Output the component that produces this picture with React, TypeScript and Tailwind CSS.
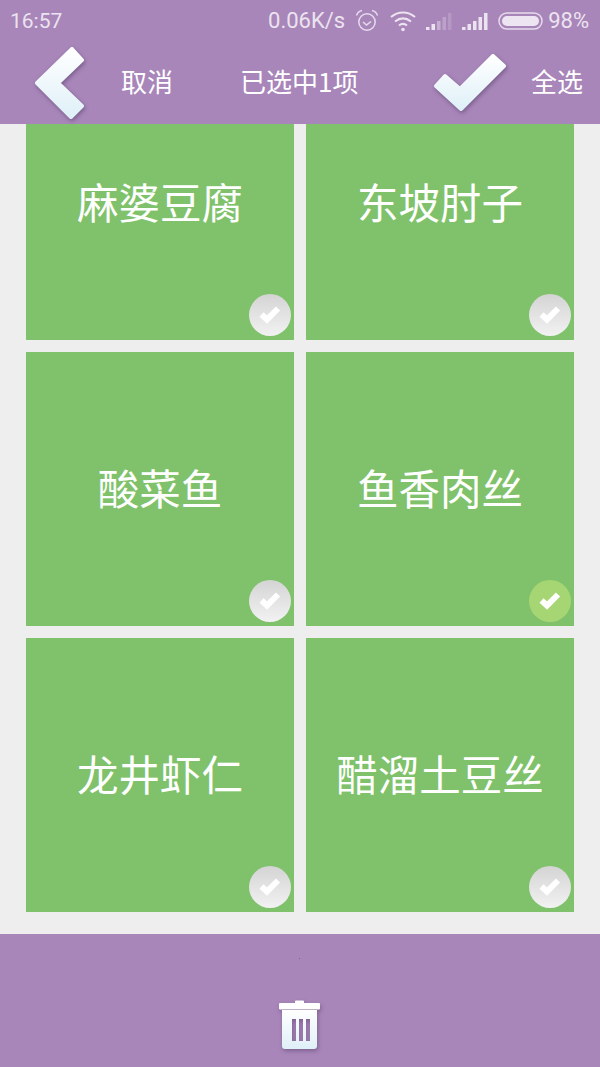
const dishes = [
  { name: "麻婆豆腐", selected: false },
  { name: "东坡肘子", selected: false },
  { name: "酸菜鱼", selected: false },
  { name: "鱼香肉丝", selected: true },
  { name: "龙井虾仁", selected: false },
  { name: "醋溜土豆丝", selected: false },
];

const cjk = "font-['Noto_Sans_CJK_SC','Noto_Sans',sans-serif]";

function IconGradient({ id }: { id: string }) {
  return (
    <defs>
      <linearGradient id={id} x1="0" y1="0" x2="0" y2="1">
        <stop offset="0%" stopColor="#ffffff" />
        <stop offset="100%" stopColor="#dff0f8" />
      </linearGradient>
    </defs>
  );
}

function StatusBar() {
  return (
    <div className="flex h-[42px] items-center pl-[10px] pr-[11px] font-['Roboto',sans-serif] text-[22px] leading-none text-[#ece3f0]">
      <span className="text-[21px]">16:57</span>
      <span className="ml-auto">0.06K/s</span>
      {/* alarm */}
      <svg className="ml-[10px]" width="24" height="24" viewBox="0 0 24 24" fill="none" stroke="#e6dbec" strokeWidth="1.5">
        <circle cx="12" cy="13" r="8.2" />
        <path d="M8 13l3.5 3 4.5-3.5" />
        <path d="M1.5 6.5C2.5 3.5 4.5 2 7 1.5M22.5 6.5C21.5 3.5 19.5 2 17 1.5" />
      </svg>
      {/* wifi */}
      <svg className="ml-[11px]" width="26" height="22" viewBox="0 0 26 22" fill="none" stroke="#ece3f0" strokeWidth="2.2">
        <path d="M1 7c7-6 17-6 24 0" />
        <path d="M5 11.5c5-4 11-4 16 0" />
        <path d="M9 15.500c2.500-2 5.500-2 8 0" />
        <circle cx="13" cy="19.500" r="1.800" fill="#ece3f0" stroke="none" />
      </svg>
      {/* signal, weak */}
      <svg className="ml-[10px]" width="26" height="18" viewBox="0 0 26 18" fill="#ece3f0">
        <rect x="0" y="15" width="3.500" height="3" />
        <rect x="5.500" y="12" width="3.500" height="6" />
        <rect x="11" y="9" width="3.500" height="9" opacity="0.45" />
        <rect x="16.500" y="5" width="3.500" height="13" opacity="0.3" />
        <rect x="22" y="1" width="3.500" height="17" opacity="0.2" />
      </svg>
      {/* signal, full */}
      <svg className="ml-[10px]" width="26" height="18" viewBox="0 0 26 18" fill="#ece3f0">
        <rect x="0" y="15" width="3.500" height="3" />
        <rect x="5.500" y="12" width="3.500" height="6" />
        <rect x="11" y="9" width="3.500" height="9" />
        <rect x="16.500" y="5" width="3.500" height="13" />
        <rect x="22" y="1" width="3.500" height="17" />
      </svg>
      {/* battery */}
      <svg className="ml-[10px]" width="45" height="18" viewBox="0 0 45 18" fill="none">
        <rect x="1" y="1" width="43" height="16" rx="8" stroke="#e6dbec" strokeWidth="1.500" />
        <rect x="4" y="4" width="37" height="10" rx="5" fill="#eee5f2" />
      </svg>
      <span className="ml-[5px]">98%</span>
    </div>
  );
}

function NavBar() {
  return (
    <div className={`flex h-[82px] items-center text-[26px] leading-none text-white ${cjk}`}>
      <svg className="ml-[30px] shrink-0 drop-shadow-[1px_2px_2px_rgba(60,40,80,0.45)]" width="56" height="74" viewBox="0 0 56 74">
        <IconGradient id="back" />
        <path
          d="M42 3L52 14L28 37L52 60L41 71L7 37Z"
          fill="url(#back)"
          stroke="url(#back)"
          strokeWidth="4"
          strokeLinejoin="round"
        />
      </svg>
      <span className="ml-[35px] w-[52px] -translate-y-[2px]">取消</span>
      <span className="ml-[67px] w-[120px] -translate-y-[2px] whitespace-nowrap">已选中1项</span>
      <svg className="ml-[73px] shrink-0 drop-shadow-[1px_2px_2px_rgba(60,40,80,0.45)]" width="76" height="62" viewBox="0 0 76 62">
        <IconGradient id="all" />
        <path
          d="M60 4L71 14L28 57L3 34L12 24L27 37Z"
          fill="url(#all)"
          stroke="url(#all)"
          strokeWidth="4"
          strokeLinejoin="round"
        />
      </svg>
      <span className="ml-[22px] -translate-y-[2px]">全选</span>
    </div>
  );
}

function CheckBadge({ selected }: { selected: boolean }) {
  return (
    <div
      className={`absolute bottom-[4px] right-[3px] flex h-[42px] w-[42px] items-center justify-center rounded-full ${
        selected ? "bg-[#a6d673]" : "bg-gradient-to-b from-[#d4d4d4] to-[#f2f2f2]"
      }`}
    >
      <svg width="42" height="42" viewBox="0 0 42 42" fill="none">
        <path d="M12.500 20.500L18 25.500L29 14.500" stroke="white" strokeWidth="6" />
      </svg>
    </div>
  );
}

function DishCard({ name, selected }: { name: string; selected: boolean }) {
  return (
    <div className="relative flex h-[274px] items-center justify-center bg-[#80c26b]">
      <span className={`text-[41.5px] leading-none text-white -translate-y-px ${cjk}`}>{name}</span>
      <CheckBadge selected={selected} />
    </div>
  );
}

export default function App() {
  return (
    <div className="flex h-[1067px] w-[600px] flex-col overflow-hidden bg-[#eeeeee]">
      <header className="relative z-10 shrink-0 bg-[#a886b9]">
        <StatusBar />
        <NavBar />
      </header>

      <main className="min-h-0 flex-1 overflow-hidden">
        {/* list is scrolled, first row is cut off under the header */}
        <div className="mt-[-58px] grid grid-cols-[268px_268px] gap-3 pl-[26px]">
          {dishes.map((d) => (
            <DishCard key={d.name} name={d.name} selected={d.selected} />
          ))}
        </div>
      </main>

      <footer className="relative flex h-[133px] shrink-0 items-end justify-center bg-[#a886b9] pb-[18px]">
        <span className="absolute left-[299px] top-[24px] h-px w-px bg-[#7d5f8e]" />
        <svg className="drop-shadow-[1px_2px_2px_rgba(60,40,80,0.4)]" width="42" height="49" viewBox="0 0 42 49">
          <IconGradient id="trash" />
          <path d="M17 0.500h7a1 1 0 0 1 1 1V3h15a1 1 0 0 1 1 1v4.500a1 1 0 0 1-1 1H1a1 1 0 0 1-1-1V4a1 1 0 0 1 1-1h15V1.500a1 1 0 0 1 1-1z" fill="white" />
          <path
            fillRule="evenodd"
            d="M3 10h35v36a3 3 0 0 1-3 3H6a3 3 0 0 1-3-3zM13 19v22h4V19zM20 19v22h4V19zM27 19v22h4V19z"
            fill="url(#trash)"
          />
        </svg>
      </footer>
    </div>
  );
}
